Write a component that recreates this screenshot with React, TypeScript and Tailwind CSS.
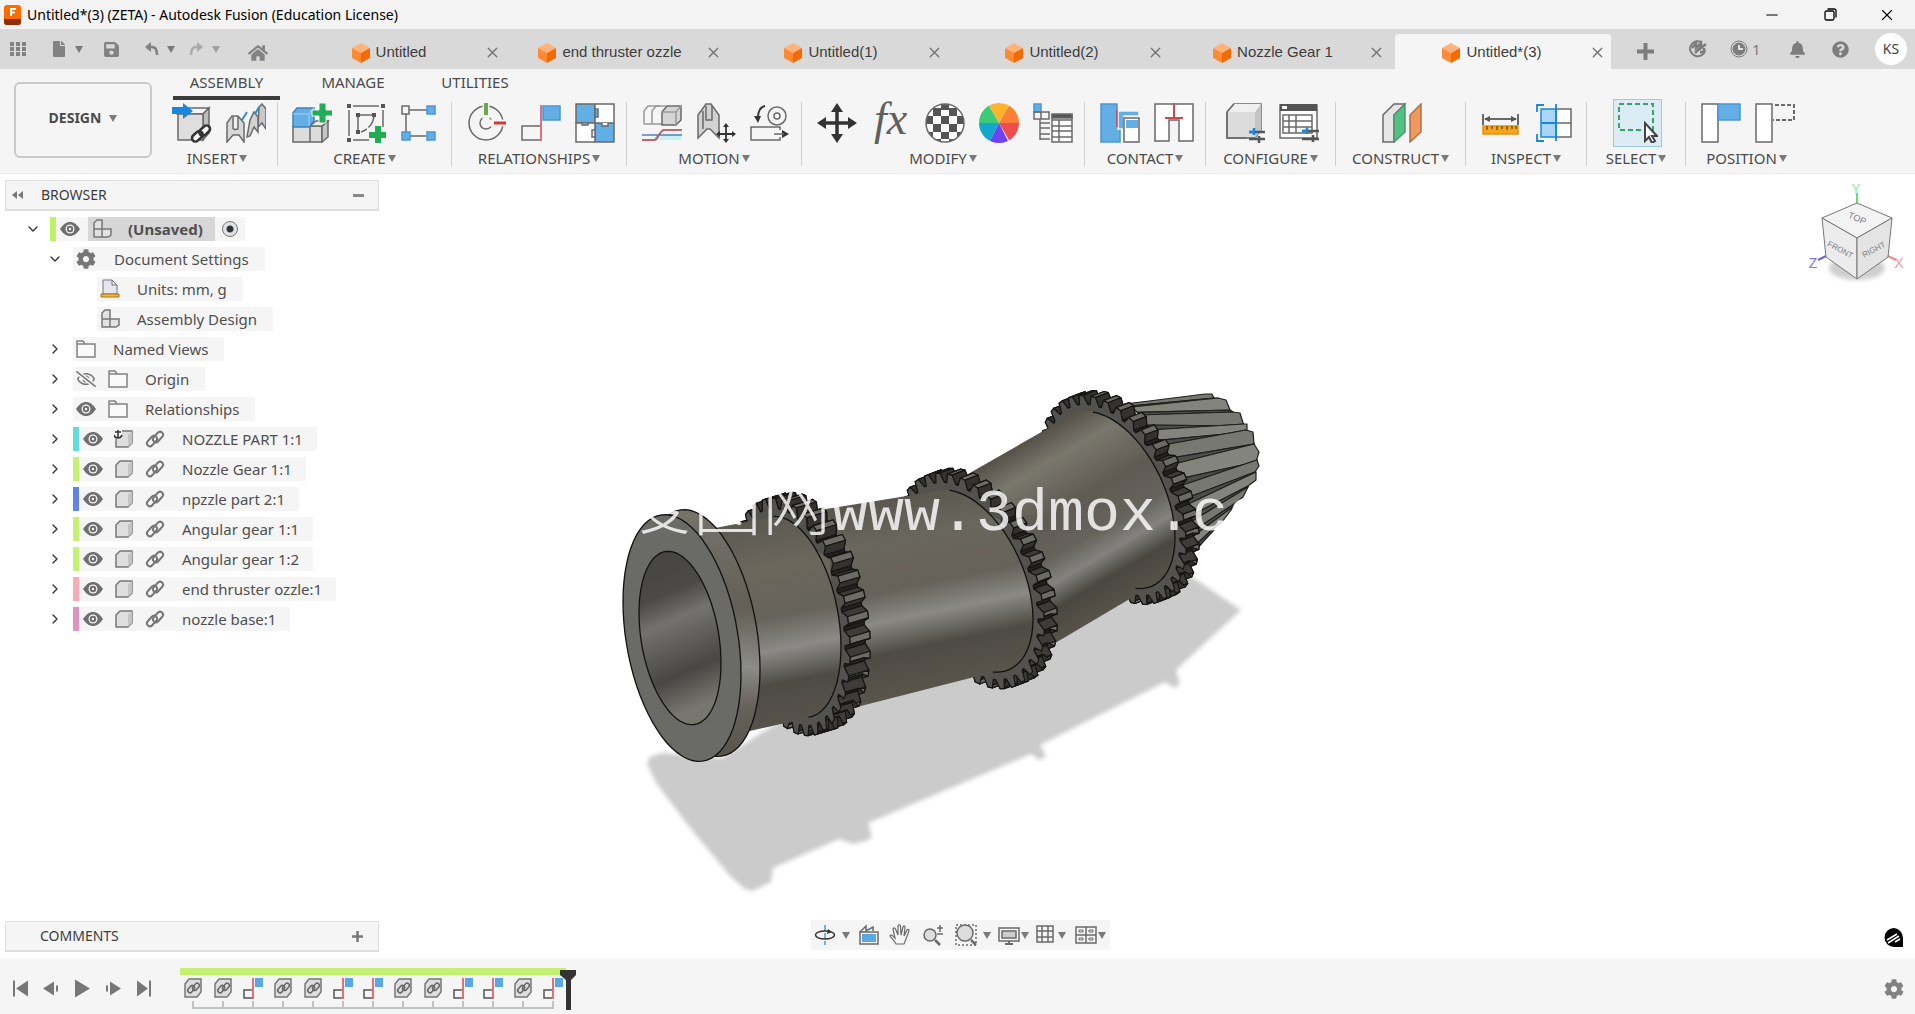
import type { ReactNode } from "react";
import { ChevronDown, ChevronRight, Minus, X } from "lucide-react";
import { FaBell, FaCog, FaFile, FaHome, FaQuestionCircle, FaRegEyeSlash, FaSave } from "react-icons/fa";

function Caret({ className = "text-[#7a7a7a]" }: { className?: string }) {
  return (
    <svg width="8" height="7" viewBox="0 0 8 7" className={className} aria-hidden="true">
      <path d="M0 0h8L4 7z" fill="currentColor" />
    </svg>
  );
}

function Icon({ children, size = 40 }: { children: ReactNode; size?: number }) {
  return (
    <svg width={size} height={size} viewBox="0 0 40 40" fill="none" stroke="#6a6a6a" strokeWidth="1.5" aria-hidden="true">
      {children}
    </svg>
  );
}

/* ---------- ribbon icons ---------- */

const icons: Record<string, ReactNode> = {
  insertComponent: (
    <Icon>
      <path d="M6 11l7-6h24l-6 6z" fill="#f4f4f4" />
      <path d="M31 11l6-6v25l-6 7z" fill="#bdbdbd" />
      <path d="M6 11h25v26H6z" fill="#dedede" />
      <path d="M0 4h11V0l10 8-10 8v-5H0z" fill="#1787e0" stroke="none" />
      <path d="M21 37l16-13" stroke="#f5f5f5" strokeWidth="8" />
      <g stroke="#333" strokeWidth="2.6">
        <rect x="19" y="30" width="12" height="7" rx="3.5" transform="rotate(-42 25 33)" />
        <rect x="27" y="24" width="12" height="7" rx="3.5" transform="rotate(-42 33 28)" />
      </g>
    </Icon>
  ),
  insertDerive: (
    <Icon>
      <path d="M33 4l3-3 4 5v20l-4-6-4 4z" fill="#c8c8c8" />
      <path d="M24 17l4-8 4 5v15l-4-5-4 9-3 1z" fill="#d2d2d2" />
      <path d="M16 17l5-8M29 11l4-7" stroke="#2a8fd8" strokeWidth="2" />
      <path d="M1 20l5-7h6l6 7v19l-5-7H7l-6 7z" fill="#d8d8d8" />
      <path d="M7 14v11c0 2 5 2 5 0V14" fill="#eee" />
    </Icon>
  ),
  newComponent: (
    <Icon>
      <path d="M1 23h17v16H1zM18 23h12v16H18z" fill="#dcdcdc" />
      <path d="M30 23l6-5v16l-6 5z" fill="#c5c5c5" />
      <path d="M18 23l6-5h12l-6 5z" fill="#eee" />
      <path d="M1 10l4-5h17v13l-5 6H1z" fill="#64aee6" stroke="#3f83b5" />
      <path d="M1 11h16v12M17 11l5-6" stroke="#8cc6f0" />
      <path d="M27 0h7v7h7v6h-7v7h-7v-7h-7V7h7z" fill="#1fae54" stroke="#f5f5f5" strokeWidth="1" />
    </Icon>
  ),
  sketch: (
    <Icon>
      <path d="M7 3h26M3 7v26M37 7v17M7 37h16" />
      <path d="M12 28V12h16c0 9-7 15-13 17" strokeDasharray="14 2" />
      <g fill="#555" stroke="none">
        <path d="M1 1h4v4H1zM35 1h4v4h-4zM1 35h4v4H1zM10 10h4v4h-4zM26 10h4v4h-4zM10 27h4v4h-4z" />
      </g>
      <path d="M29 23h6v6h6v6h-6v6h-6v-6h-6v-6h6z" fill="#1fae54" stroke="none" />
    </Icon>
  ),
  pattern: (
    <Icon>
      <path d="M2 3h7v8H2zM9 7h18M6 11v18M10 33h16" />
      <path d="M27 3h8v8h-8zM2 29h8v8H2zM27 29h8v8h-8z" fill="#64aee6" stroke="#4a97d4" />
    </Icon>
  ),
  joint: (
    <Icon>
      <circle cx="19" cy="20" r="17" />
      <circle cx="19" cy="20" r="6" />
      <path d="M19 0v18" stroke="#f5f5f5" strokeWidth="7" />
      <path d="M21 20h18" stroke="#f5f5f5" strokeWidth="7" />
      <path d="M19 0v12" stroke="#6aa84f" strokeWidth="4" />
      <path d="M27 20h12" stroke="#d93636" strokeWidth="3" />
    </Icon>
  ),
  asBuilt: (
    <Icon>
      <path d="M19 23H1v14h18" />
      <path d="M22 3h17v14H22z" fill="#64aee6" stroke="#4a97d4" />
      <path d="M20 2v36" stroke="#d5474e" />
    </Icon>
  ),
  rigidGroup: (
    <Icon>
      <path d="M1 1h19v19H1zM20 20h19v19H20z" fill="#64aee6" />
      <path d="M20 1h19v19H20zM1 20h19v19H1z" fill="#fff" />
      <path d="M20 6h3v8h-3zM7 20v2h6v-2" fill="#64aee6" />
      <path d="M20 27h-3v7h3zM27 20v3h6v-3" fill="#fff" />
    </Icon>
  ),
  motionStudy: (
    <Icon>
      <path d="M2 21V8l4-5h12" stroke="#999" />
      <path d="M10 21V8l4-5h10M2 21h18" stroke="#999" />
      <path d="M20 9l5-6h14v14l-5 5H20z" fill="#d5d5d5" />
      <path d="M34 9v13M20 9h14l5-6" stroke="#999" />
      <path d="M22 31h17v6H16z" fill="#c7f0f4" stroke="none" />
      <path d="M0 37h12l9-10h18" stroke="#58c5bd" />
      <path d="M0 32h40" stroke="#5580b8" />
      <path d="M0 37h13c3 0 5-10 9-10h18" stroke="#d5474e" />
    </Icon>
  ),
  drive: (
    <Icon>
      <path d="M2 12l8-11h5l8 11v23l-9-9h-3l-9 9z" fill="#d2d2d2" />
      <path d="M10 3v14h6V3M7 8v18" />
      <path d="M30 22v17M21 31h18" stroke="#333" strokeWidth="1.8" />
      <path d="M30 20l3 4h-6zM30 40l3-4h-6zM20 31l4-3v6zM40 31l-4-3v6z" fill="#333" stroke="none" />
    </Icon>
  ),
  motionLink: (
    <Icon>
      <circle cx="27" cy="13" r="9" />
      <circle cx="27" cy="13" r="3" />
      <path d="M15 3C10 4 8 9 8 15" stroke="#333" strokeWidth="2" />
      <path d="M4 13h7l-3 7zM32 27l7 4-7 4z" fill="#333" stroke="none" />
      <path d="M30 27v-3H1v13h29v-3M24 31h10" />
    </Icon>
  ),
  move: (
    <Icon>
      <path d="M20 5v30M5 20h30" stroke="#333" strokeWidth="3.5" />
      <path d="M20 0l6 9H14zM20 40l6-9H14zM0 20l9-6v12zM40 20l-9-6v12z" fill="#333" stroke="none" />
    </Icon>
  ),
  parameters: (
    <span className="-mt-2 font-['Liberation_Serif',serif] text-[46px] leading-none text-[#5f5f5f] italic">fx</span>
  ),
  physicalMaterial: (
    <Icon>
      <clipPath id="ball">
        <circle cx="20" cy="20" r="19" />
      </clipPath>
      <g clipPath="url(#ball)" stroke="none">
        <path d="M0 0h40v40H0z" fill="#fff" />
        <path
          d="M16 0h8v7h-8zM8 5h8v8H8zM24 5h8v8h-8zM1 13h7v8H1zM16 13h8v8h-8zM32 13h7v8h-7zM8 21h8v8H8zM24 21h8v8h-8zM1 29h7v5H1zM16 29h8v7h-8zM32 29h7v5h-7zM10 36h6v4h-6zM24 36h6v4h-6z"
          fill="#555"
        />
      </g>
      <circle cx="20" cy="20" r="19" />
    </Icon>
  ),
  appearance: (
    <Icon>
      <clipPath id="wheel">
        <circle cx="20" cy="20" r="20" />
      </clipPath>
      <g clipPath="url(#wheel)" stroke="none">
        <path d="M20 20L6-4h28z" fill="#fbb42b" />
        <path d="M20 20L34-4l10 24z" fill="#fb8137" />
        <path d="M20 20h24L34 44z" fill="#ef4d4d" />
        <path d="M20 20l12 24H8z" fill="#6f42f5" />
        <path d="M20 20L8 44-6 20z" fill="#10a9cb" />
        <path d="M20 20H-6L6-4z" fill="#3fca78" />
      </g>
    </Icon>
  ),
  manageMaterials: (
    <Icon>
      <path d="M1 1h7v8H1z" fill="#64aee6" stroke="#4a97d4" />
      <path d="M1 9h7v7H1zM8 9h8v7H8zM7 20h10M7 25h10M7 31h10M7 36h10M7 16v21" />
      <path d="M19 12h20v27H19z" fill="#fff" />
      <path d="M19 17h20M19 23h20M19 28h20M19 34h20M26 17v22" />
      <path d="M19 11h20v4H19z" fill="#555" />
    </Icon>
  ),
  contactSets: (
    <Icon>
      <path d="M1 1h16v24h3v14H1z" fill="#64aee6" stroke="#4a97d4" />
      <path d="M18 8h21v5H24v13h-6z" fill="#64aee6" stroke="#f5f5f5" />
      <path d="M17 7v17" stroke="#d5474e" />
      <path d="M24 15h15v24H24z" fill="#fff" />
      <path d="M26 17h12v8H26z" fill="#64aee6" stroke="none" />
    </Icon>
  ),
  contactAll: (
    <Icon>
      <path d="M1 1h38v37H25V17H15v21H1z" fill="#fff" />
      <path d="M20 0v15M11 15h18" stroke="#d5474e" strokeWidth="2" />
    </Icon>
  ),
  configure: (
    <Icon>
      <path d="M2 9l7-8h27v26l-6 8H2z" fill="#dcdcdc" />
      <path d="M30 9l6-8v26l-6 8z" fill="#c4c4c4" stroke="none" />
      <path d="M2 9l7-8h27l-6 8z" fill="#f0f0f0" stroke="none" />
      <path d="M2 9l7-8M2 9v26h20" />
      <path d="M24 29h16M24 36h16M34 33v7" stroke="#555" strokeWidth="2.5" />
      <path d="M24 29h5M29 25v7" stroke="#1787e0" strokeWidth="2.5" />
    </Icon>
  ),
  configTable: (
    <Icon>
      <path d="M1 2h37v33H1z" fill="#fff" />
      <path d="M1 1h37v7H1z" fill="#555" stroke="none" />
      <path d="M3 3h5v3H3z" fill="#fff" stroke="none" />
      <path d="M4 12h29v18H4zM4 18h29M4 24h29M10 12v18M17 12v18" />
      <path d="M23 28h17M23 36h17M34 32v7" stroke="#555" strokeWidth="2.5" />
      <path d="M23 28h6M28 24v7" stroke="#1787e0" strokeWidth="2.5" />
    </Icon>
  ),
  plane: (
    <Icon>
      <path d="M1 12L12 1h11L12 12v27H1z" fill="#e6e6e6" />
      <path d="M12 12L23 1v28L12 39z" fill="#4fc482" stroke="#5b8f70" />
      <path d="M28 12L39 1v28L28 39z" fill="#f0995c" stroke="#a8744f" />
    </Icon>
  ),
  measure: (
    <Icon>
      <path d="M2 11v11M37 11v11M4 16h31" strokeWidth="2" />
      <path d="M3 16l6-3v6zM36 16l-6-3v6z" fill="#555" stroke="none" />
      <path d="M2 23h35v8H2z" fill="#f5a51d" stroke="#e0920c" />
      <path d="M6 23v4M11 23v3M16 23v4M21 23v3M26 23v4M31 23v3M35 23v3" stroke="#7a560f" />
    </Icon>
  ),
  interference: (
    <Icon>
      <path d="M21 6h15v28H21zM21 20h15" fill="#fff" />
      <path d="M6 6h15v28H6z" fill="#a9d5f7" stroke="#1787e0" />
      <path d="M6 20h15M21 1v37M2 9V2h7M2 31v7h7" stroke="#1787e0" strokeWidth="1.8" />
    </Icon>
  ),
  select: (
    <Icon>
      <path d="M1 1h34v26H1z" stroke="#2fa866" strokeWidth="2" strokeDasharray="5 3" />
      <path d="M27 20v18l4-4 3 6 3-2-3-5h5z" fill="#fff" stroke="#444" strokeWidth="2" />
    </Icon>
  ),
  capture: (
    <Icon>
      <path d="M1 1h16v38H1z" fill="#fff" />
      <path d="M17 1h22v16H17z" fill="#64aee6" stroke="#4a97d4" />
    </Icon>
  ),
  revert: (
    <Icon>
      <path d="M1 1h16v38H1z" fill="#fff" />
      <path d="M20 2h19v15H18" strokeWidth="2" strokeDasharray="4 2" />
    </Icon>
  ),
};

const groups: { label: string; width: string; tools: string[] }[] = [
  { label: "INSERT", width: "w-[121px]", tools: ["insertComponent", "insertDerive"] },
  { label: "CREATE", width: "w-[174px]", tools: ["newComponent", "sketch", "pattern"] },
  { label: "RELATIONSHIPS", width: "w-[175px]", tools: ["joint", "asBuilt", "rigidGroup"] },
  { label: "MOTION", width: "w-[175px]", tools: ["motionStudy", "drive", "motionLink"] },
  {
    label: "MODIFY",
    width: "w-[283px]",
    tools: ["move", "parameters", "physicalMaterial", "appearance", "manageMaterials"],
  },
  { label: "CONTACT", width: "w-[121px]", tools: ["contactSets", "contactAll"] },
  { label: "CONFIGURE", width: "w-[130px]", tools: ["configure", "configTable"] },
  { label: "CONSTRUCT", width: "w-[130px]", tools: ["plane"] },
  { label: "INSPECT", width: "w-[121px]", tools: ["measure", "interference"] },
  { label: "SELECT", width: "w-[99px]", tools: ["select"] },
  { label: "POSITION", width: "w-[121px]", tools: ["capture", "revert"] },
];

/* ---------- top bars ---------- */

function TitleBar() {
  return (
    <header className="flex h-[29px] shrink-0 items-center bg-[#f3f3f3] pl-1 text-sm text-black">
      <svg width="17" height="20" viewBox="0 0 17 20" aria-hidden="true">
        <rect width="17" height="20" rx="3" fill="#ff6b00" />
        <path d="M0 14h17v3a3 3 0 0 1-3 3H3a3 3 0 0 1-3-3z" fill="#8f3000" />
        <path d="M6 11V3h6v2H8v1.500h3v2H8V11z" fill="#fff" />
      </svg>
      <h1 className="ml-1.5 flex-1">Untitled*(3) (ZETA) - Autodesk Fusion (Education License)</h1>
      <button type="button" aria-label="Minimize" className="flex w-[58px] justify-center">
        <Minus size={18} strokeWidth={1.5} />
      </button>
      <button type="button" aria-label="Restore" className="flex w-[58px] justify-center">
        <svg width="13" height="13" viewBox="0 0 13 13" fill="none" stroke="#000" strokeWidth="1.3">
          <rect x="1" y="3" width="9" height="9" rx="1.500" />
          <path d="M3.500 1H10a2 2 0 0 1 2 2v6.500" />
        </svg>
      </button>
      <button type="button" aria-label="Close" className="flex w-[56px] justify-center">
        <X size={18} strokeWidth={1.5} />
      </button>
    </header>
  );
}

function DocCube() {
  return (
    <svg width="18" height="20" viewBox="0 0 18 20" aria-hidden="true">
      <path d="M9 0l9 5-9 5-9-5z" fill="#ffb27a" />
      <path d="M0 5l9 5v10l-9-5z" fill="#ff8a35" />
      <path d="M18 5l-9 5v10l9-5z" fill="#f26a00" />
    </svg>
  );
}

const documents = ["Untitled", "end thruster ozzle", "Untitled(1)", "Untitled(2)", "Nozzle Gear 1", "Untitled*(3)"];

function DocTab({ name, active }: { name: string; active: boolean }) {
  return (
    <div
      className={`flex h-[35px] items-center pt-0.5 pr-[5px] ${
        active ? "ml-[5px] w-[216px] rounded-t bg-[#f5f5f5]" : "w-[221px] pl-[9px]"
      }`}
    >
      <button type="button" className="flex flex-1 items-center justify-center gap-1.5">
        <DocCube />
        {name}
      </button>
      <button type="button" aria-label={`Close ${name}`} className="text-[#777]">
        <X size={17} strokeWidth={2} />
      </button>
    </div>
  );
}

function TabBar() {
  return (
    <div className="flex h-10 shrink-0 items-end bg-[#d9d9d9] text-[#3c3c3c]">
      <div className="flex h-10 w-[285px] items-center pl-2.5 text-[#828282]">
        <button type="button" aria-label="Data panel" className="mr-6">
          <svg width="17" height="17" viewBox="0 0 17 17" fill="currentColor">
            <path d="M0 1h4v4H0zM6 1h4v4H6zM12 1h4v4h-4zM0 6h4v4H0zM6 6h4v4H6zM12 6h4v4h-4zM0 11h4v4H0zM6 11h4v4H6zM12 11h4v4h-4z" />
          </svg>
        </button>
        <button type="button" aria-label="File" className="flex items-center gap-2">
          <FaFile size={16} />
          <Caret />
        </button>
        <button type="button" aria-label="Save" className="ml-5">
          <FaSave size={17} />
        </button>
        <button type="button" aria-label="Undo" className="ml-6 flex items-center gap-2">
          <svg width="15" height="14" viewBox="0 0 15 14" fill="none" stroke="currentColor" strokeWidth="2.500">
            <path d="M2 5h6c4 0 5 3 5 8" />
            <path d="M7 0L1 5l6 5" fill="currentColor" stroke="none" />
          </svg>
          <Caret />
        </button>
        <button type="button" aria-label="Redo" className="ml-3.5 flex items-center gap-2 text-[#ababab]">
          <svg width="15" height="14" viewBox="0 0 15 14" fill="none" stroke="currentColor" strokeWidth="2.500">
            <path d="M13 5H7c-4 0-5 3-5 8" />
            <path d="M8 0l6 5-6 5" fill="currentColor" stroke="none" />
          </svg>
          <Caret className="text-[#a0a0a0]" />
        </button>
        <button type="button" aria-label="Home" className="mt-2 ml-7">
          <FaHome size={20} />
        </button>
      </div>
      <nav className="flex items-end font-['Liberation_Sans',sans-serif] text-[15px]">
        {documents.map((name, i) => (
          <DocTab key={name} name={name} active={i === documents.length - 1} />
        ))}
      </nav>
      <div className="flex h-10 flex-1 items-center pl-[26px] text-[#7d7d7d]">
        <button type="button" aria-label="New document" className="mt-1 w-[52px]">
          <svg width="17" height="17" viewBox="0 0 17 17" stroke="currentColor" strokeWidth="4">
            <path d="M8.500 0v17M0 8.500h17" />
          </svg>
        </button>
        <button type="button" aria-label="Extensions" className="w-[41px]">
          <svg width="18" height="18" viewBox="0 0 18 18" fill="none" stroke="currentColor" strokeWidth="2">
            <path d="M12 2a7.500 7.500 0 1 0 4 8" />
            <path d="M6 13l6-6M3 8l4-5v5l5-5v5l5-4M11 12h4V8" strokeWidth="2.500" />
          </svg>
        </button>
        <button type="button" aria-label="Job status" className="flex w-[59px] items-center gap-1 text-[15px]">
          <svg width="18" height="18" viewBox="0 0 18 18" fill="none" stroke="currentColor">
            <circle cx="9" cy="9" r="8" />
            <circle cx="9" cy="9" r="6" fill="currentColor" />
            <path d="M9 5v4h4" stroke="#fff" strokeWidth="1.500" />
          </svg>
          1
        </button>
        <button type="button" aria-label="Notifications" className="w-[43px]">
          <FaBell size={17} />
        </button>
        <button type="button" aria-label="Help" className="flex-1">
          <FaQuestionCircle size={17} />
        </button>
        <button type="button" className="mr-2 h-8 w-8 rounded-full bg-white text-sm text-[#444]">
          KS
        </button>
      </div>
    </div>
  );
}

function Ribbon() {
  return (
    <div className="flex h-[105px] shrink-0 border-b border-[#ececec] bg-[#f5f5f5] text-[15px] text-[#4a4a4a]">
      <button
        type="button"
        className="mt-[13px] ml-3.5 flex h-[76px] w-[138px] items-center justify-center gap-2 rounded-md border-2 border-[#c9c9c9] pb-1 text-sm font-bold"
      >
        DESIGN
        <Caret />
      </button>
      <div className="ml-[5px]">
        <nav className="ml-4 flex h-[31px]">
          <button type="button" className="w-[107px] border-b-4 border-[#3c3c3c]">
            ASSEMBLY
          </button>
          <button type="button" className="ml-3.5 w-[118px] pb-1">
            MANAGE
          </button>
          <button type="button" className="ml-1 w-[118px] pb-1">
            UTILITIES
          </button>
        </nav>
        <div className="mt-0.5 flex">
          {groups.map((g) => (
            <section
              key={g.label}
              className={`${g.width} flex h-16 flex-col items-center border-r border-[#cfcfcf] last:border-r-0`}
            >
              <div className="-mt-[3px] flex pl-[3px]">
                {g.tools.map((t) => (
                  <button
                    key={t}
                    type="button"
                    aria-label={t}
                    className={`flex items-center justify-center ${
                      t === "select" ? "h-12 w-[49px] border border-[#9ccae3] bg-[#dcecf5]" : "h-12 w-[54px]"
                    }`}
                  >
                    {icons[t]}
                  </button>
                ))}
              </div>
              <button type="button" className="mt-px flex items-center gap-0.5 leading-5">
                {g.label}
                <Caret />
              </button>
            </section>
          ))}
        </div>
      </div>
    </div>
  );
}

/* ---------- browser tree ---------- */

function Folder() {
  return (
    <svg width="20" height="18" viewBox="0 0 20 18" fill="#fafafa" stroke="#828282" strokeWidth="1.500" aria-hidden="true">
      <path d="M1 4V1h6l2 3h10v13H1z" />
      <path d="M1 4h8" />
    </svg>
  );
}

function Body({ anchored = false }: { anchored?: boolean }) {
  return (
    <svg width="20" height="20" viewBox="0 0 20 20" fill="#dedede" stroke="#777" strokeWidth="1.500" aria-hidden="true">
      <path d="M2 6l4-4h12v12l-4 4H2z" />
      <path d="M14 6l4-4v12l-4 4z" fill="#c4c4c4" stroke="none" />
      {anchored && (
        <>
          <path d="M0 0h8v10H0z" fill="#f5f5f5" stroke="none" />
          <path d="M4 1v8M1 3h6M0 6c1 4 7 4 8 0" fill="none" stroke="#333" />
        </>
      )}
    </svg>
  );
}

function AssemblyIcon() {
  return (
    <svg width="20" height="20" viewBox="0 0 20 20" fill="#e2e2e2" stroke="#777" strokeWidth="1.500" aria-hidden="true">
      <path d="M2 4l3-3h5v17H2zM10 10h9v6l-3 2h-6M2 10h8" />
    </svg>
  );
}

function UnitsIcon() {
  return (
    <svg width="20" height="20" viewBox="0 0 20 20" aria-hidden="true">
      <path d="M3 1h9l5 5v9H3z" fill="#e6e6ee" stroke="#777" />
      <path d="M12 1v5h5" fill="none" stroke="#777" />
      <path d="M1 15h18v3H1z" fill="#f5b53a" stroke="#a8741a" />
    </svg>
  );
}

function Eye() {
  return (
    <svg width="20" height="14" viewBox="0 0 20 14" aria-hidden="true">
      <path d="M0 7C4 1 7 0 10 0s6 1 10 7c-4 6-7 7-10 7S4 13 0 7z" fill="#6f6f6f" />
      <circle cx="10" cy="7" r="4.500" fill="#f5f5f5" />
      <circle cx="10" cy="7" r="3.200" fill="#6f6f6f" />
      <circle cx="10" cy="7" r="1.200" fill="#f5f5f5" />
    </svg>
  );
}

function ChainLink() {
  return (
    <svg width="20" height="20" viewBox="0 0 20 20" fill="none" stroke="#777" strokeWidth="2" aria-hidden="true">
      <rect x="1" y="9" width="12" height="6" rx="3" transform="rotate(-48 7 12)" />
      <rect x="7" y="5" width="12" height="6" rx="3" transform="rotate(-48 13 8)" />
    </svg>
  );
}

type Row = { label: string; indent: string; icons: ReactNode; chevron?: boolean };

const rows: Row[] = [
  { label: "Units: mm, g", indent: "ml-[72px]", icons: <UnitsIcon /> },
  { label: "Assembly Design", indent: "ml-[72px]", icons: <AssemblyIcon /> },
  { label: "Named Views", indent: "ml-2", chevron: true, icons: <Folder /> },
  {
    label: "Origin",
    indent: "ml-2",
    chevron: true,
    icons: (
      <>
        <FaRegEyeSlash size={20} className="text-[#777]" />
        <Folder />
      </>
    ),
  },
  {
    label: "Relationships",
    indent: "ml-2",
    chevron: true,
    icons: (
      <>
        <Eye />
        <Folder />
      </>
    ),
  },
];

const components = [
  { label: "NOZZLE PART 1:1", bar: "bg-[#62dcdc]", anchored: true },
  { label: "Nozzle Gear 1:1", bar: "bg-[#c5f172]" },
  { label: "npzzle part 2:1", bar: "bg-[#5f85e6]" },
  { label: "Angular gear 1:1", bar: "bg-[#c5f172]" },
  { label: "Angular gear 1:2", bar: "bg-[#c5f172]" },
  { label: "end thruster ozzle:1", bar: "bg-[#f9acb6]" },
  { label: "nozzle base:1", bar: "bg-[#e092c2]" },
];

function Expander({ open = false }: { open?: boolean }) {
  return (
    <button type="button" aria-label={open ? "Collapse" : "Expand"} className="flex w-5 justify-center text-[#333]">
      {open ? <ChevronDown size={16} strokeWidth={2} /> : <ChevronRight size={16} strokeWidth={2} />}
    </button>
  );
}

function Browser() {
  return (
    <aside className="w-[374px]">
      <div className="flex h-[31px] items-center border border-b-2 border-[#dedede] bg-[#f5f5f5] text-sm text-[#3c3c3c]">
        <button type="button" aria-label="Collapse panel" className="w-[35px] pl-1.5">
          <svg width="11" height="8" viewBox="0 0 11 8" fill="#777">
            <path d="M5 0v8L0 4zM11 0v8L6 4z" />
          </svg>
        </button>
        <h2 className="flex-1">BROWSER</h2>
        <button type="button" aria-label="Minimize panel" className="mr-3.5 h-[3px] w-[11px] bg-[#888]" />
      </div>
      <ul className="mt-[3px] text-[15px] text-[#4f4f4f]">
        <li className="flex h-[30px] items-center pl-[18px]">
          <Expander open />
          <div className="ml-[7px] flex h-6 items-center bg-[#f5f5f5]">
            <span className="h-full w-1.5 bg-[#bdf267]" />
            <span className="ml-1 w-7">
              <Eye />
            </span>
            <button type="button" className="flex h-full items-center gap-4 bg-[#d6d6d6] pr-3 pl-1 font-bold">
              <AssemblyIcon />
              (Unsaved)
            </button>
            <input
              type="radio"
              defaultChecked
              aria-label="Activate component"
              className="mx-[7px] h-4 w-4 appearance-none rounded-full border border-[#777] bg-[radial-gradient(#333_0_3px,#dfe3ea_4px)]"
            />
          </div>
        </li>
        <li className="flex h-[30px] items-center pl-10">
          <Expander open />
          <div className="ml-2 flex h-6 items-center gap-[18px] bg-[#f5f5f5] pr-4 pl-[3px]">
            <FaCog size={20} className="text-[#777]" />
            Document Settings
          </div>
        </li>
        {rows.map((r) => (
          <li key={r.label} className={`flex h-[30px] items-center ${r.chevron ? "pl-10" : "pl-5"}`}>
            {r.chevron && <Expander />}
            <div className={`${r.indent} flex h-6 items-center bg-[#f5f5f5] pr-4 pl-[3px]`}>
              <span className="mr-[17px] flex items-center gap-3">{r.icons}</span>
              {r.label}
            </div>
          </li>
        ))}
        {components.map((c) => (
          <li key={c.label} className="flex h-[30px] items-center pl-10">
            <Expander />
            <div className="ml-2 flex h-6 items-center bg-[#f5f5f5] pr-3.5">
              <span className={`${c.bar} mr-1 h-full w-1.5`} />
              <span className="mr-[17px] flex items-center gap-[11px]">
                <Eye />
                <Body anchored={c.anchored} />
                <ChainLink />
              </span>
              {c.label}
            </div>
          </li>
        ))}
      </ul>
    </aside>
  );
}

/* ---------- model view ---------- */

// A circle seen at an angle: x = cx + rx cos t, y = cy + k cos t + h sin t
type Ring = { cx: number; cy: number; rx: number; k: number; h: number };

const at = (r: Ring, t: number, s = 1, dx = 0, dy = 0): [number, number] => [
  r.cx + dx + s * r.rx * Math.cos(t),
  r.cy + dy + s * (r.k * Math.cos(t) + r.h * Math.sin(t)),
];

const toPath = (pts: [number, number][]) => "M" + pts.map((p) => `${p[0].toFixed(1)} ${p[1].toFixed(1)}`).join("L") + "Z";

const ringPath = (r: Ring, s = 1, dx = 0, dy = 0) =>
  toPath(Array.from({ length: 72 }, (_, i) => at(r, (i / 72) * Math.PI * 2, s, dx, dy)));

const flange: Ring = { cx: 682, cy: 638, rx: 59, k: 36, h: 118 };
const bore: Ring = { cx: 680, cy: 638, rx: 41, k: 25, h: 83 };
const ring1: Ring = { cx: 790, cy: 617, rx: 51, k: 30, h: 96 };
const ring2: Ring = { cx: 970, cy: 581, rx: 63, k: 38, h: 83 };
const ring3: Ring = { cx: 1113, cy: 500, rx: 62, k: 38, h: 80 };

const TEETH = 36;

function Gear({ ring, dx, dy }: { ring: Ring; dx: number; dy: number }) {
  const step = (Math.PI * 2) / TEETH;
  const outline: { t: number; s: number }[] = [];
  for (let i = 0; i < TEETH; i++) {
    const t = i * step;
    outline.push({ t, s: 1.08 }, { t: t + step * 0.25, s: 1.18 }, { t: t + step * 0.6, s: 1.18 }, { t: t + step * 0.8, s: 1.08 });
  }
  const front = outline.map((p) => at(ring, p.t, p.s));
  const back = outline.map((p) => at(ring, p.t, p.s, dx, dy));
  const shades = ["#3d3c38", "#6c6b66", "#33322f", "#232220"];
  return (
    <g stroke="#151513" strokeWidth="1.2" strokeLinejoin="round">
      <path d={toPath(back)} fill="#3d3c38" />
      {front.map((p, i) => {
        const n = (i + 1) % front.length;
        return <path key={i} d={toPath([p, front[n], back[n], back[i]])} fill={shades[i % 4]} />;
      })}
      <path d={toPath(front)} fill="#53524e" />
    </g>
  );
}

function TubeEdge({ ring }: { ring: Ring }) {
  const pts = Array.from({ length: 32 }, (_, i) => at(ring, -1.9 + i * 0.1));
  return <polyline points={pts.map((p) => p.join(",")).join(" ")} fill="none" stroke="#111" strokeWidth="1.3" />;
}

// Ridges of the bevel gear: start on the ring, end on the outer rim, with the notch after each one
const ridges: { base: [number, number]; tip: [number, number]; top: [number, number]; notch: [number, number] }[] = [
  { base: [1125, 404], tip: [1205, 394], top: [1212, 394], notch: [1214, 398] },
  { base: [1132, 407], tip: [1218, 398], top: [1226, 400], notch: [1230, 410] },
  { base: [1140, 415], tip: [1233, 412], top: [1240, 413], notch: [1244, 426] },
  { base: [1150, 430], tip: [1244, 424], top: [1247, 424], notch: [1247, 432] },
  { base: [1158, 446], tip: [1246, 430], top: [1253, 432], notch: [1254, 444] },
  { base: [1166, 466], tip: [1254, 444], top: [1259, 452], notch: [1256, 462] },
  { base: [1174, 488], tip: [1257, 460], top: [1259, 466], notch: [1255, 472] },
  { base: [1180, 508], tip: [1256, 472], top: [1256, 480], notch: [1248, 486] },
  { base: [1184, 526], tip: [1248, 487], top: [1243, 497], notch: [1234, 504] },
  { base: [1188, 540], tip: [1234, 506], top: [1222, 522], notch: [1214, 528] },
  { base: [1190, 556], tip: [1214, 530], top: [1200, 546], notch: [1196, 550] },
];

function Model() {
  return (
    <svg viewBox="606 370 703 530" className="mt-[196px] h-[530px] w-[703px]" role="img" aria-label="Thruster nozzle assembly">
      <defs>
        <filter id="soft">
          <feGaussianBlur stdDeviation="2" />
        </filter>
        <linearGradient id="tube1" gradientUnits="userSpaceOnUse" x1="745" y1="520" x2="785" y2="725">
          <stop offset="0" stopColor="#5b5850" />
          <stop offset="0.25" stopColor="#6b675d" />
          <stop offset="0.48" stopColor="#66635b" />
          <stop offset="0.64" stopColor="#8b8a86" />
          <stop offset="0.8" stopColor="#4e4b45" />
          <stop offset="1" stopColor="#57534b" />
        </linearGradient>
        <linearGradient id="tube2" gradientUnits="userSpaceOnUse" x1="860" y1="505" x2="900" y2="700">
          <stop offset="0" stopColor="#5a574f" />
          <stop offset="0.2" stopColor="#69665d" />
          <stop offset="0.45" stopColor="#66625a" />
          <stop offset="0.6" stopColor="#8a8984" />
          <stop offset="0.76" stopColor="#4e4b44" />
          <stop offset="1" stopColor="#5a564d" />
        </linearGradient>
        <linearGradient id="tube3" gradientUnits="userSpaceOnUse" x1="1030" y1="440" x2="1125" y2="603">
          <stop offset="0" stopColor="#57534b" />
          <stop offset="0.15" stopColor="#7a776d" />
          <stop offset="0.4" stopColor="#5f5b53" />
          <stop offset="0.6" stopColor="#66635c" />
          <stop offset="0.72" stopColor="#83827e" />
          <stop offset="0.84" stopColor="#4a4740" />
          <stop offset="1" stopColor="#57534a" />
        </linearGradient>
        <linearGradient id="rim" x1="0" y1="0" x2="0" y2="1">
          <stop offset="0" stopColor="#74736c" />
          <stop offset="0.4" stopColor="#635f56" />
          <stop offset="0.64" stopColor="#8c8b87" />
          <stop offset="0.8" stopColor="#66625a" />
          <stop offset="1" stopColor="#57544d" />
        </linearGradient>
        <linearGradient id="inside" x1="0" y1="0" x2="0.2" y2="1">
          <stop offset="0" stopColor="#45443f" />
          <stop offset="0.3" stopColor="#4c4a47" />
          <stop offset="0.46" stopColor="#73726f" />
          <stop offset="0.78" stopColor="#494744" />
          <stop offset="1" stopColor="#77766f" />
        </linearGradient>
      </defs>

      <path
        filter="url(#soft)"
        fill="#cbcbcb"
        d="M647 762l3-5 12-4 60 5 300-190 167 7 52 35-65 60 4 14-6 4-9-6-125 63 6 11-6 4-9-6-163 69 4 14-6 4-13 3-14-5-66 29-2 14-18 9-8-2-14-12-40-48-35-46-7-15z"
      />

      <g stroke="#20201e" strokeWidth="1.2" strokeLinejoin="round">
        <path d={toPath([...ridges.map((r) => r.base), ...ridges.map((r) => r.notch).reverse()])} fill="#484945" />
        {ridges.slice(0, -1).map((r, i) => {
          const next = ridges[i + 1];
          const mid: [number, number] = [(r.base[0] + next.base[0] * 2) / 3, (r.base[1] + next.base[1] * 2) / 3];
          return (
            <g key={i}>
              <path d={toPath([r.base, r.tip, r.top, r.notch, mid])} fill={i % 2 ? "#83847e" : "#777872"} />
              <path d={toPath([mid, r.notch, next.tip, next.base])} fill="#4c4d48" />
            </g>
          );
        })}
      </g>

      <Gear ring={ring3} dx={13} dy={-5} />
      <path d="M940 490L1073 414C1080 411 1090 410 1098 413L1170 540 1150 584 1133 597 1018 665z" fill="url(#tube3)" />
      <path d={ringPath(ring3)} fill="url(#tube3)" />
      <TubeEdge ring={ring3} />

      <Gear ring={ring2} dx={13} dy={-5} />
      <path d="M770 518L944 490 1000 520 1020 640 990 673 806 720z" fill="url(#tube2)" />
      <path d={ringPath(ring2)} fill="url(#tube2)" />
      <TubeEdge ring={ring2} />

      <Gear ring={ring1} dx={20} dy={-6} />
      <path d="M705 530L772 517 830 560 835 680 808 718 750 731z" fill="url(#tube1)" />
      <path d={ringPath(ring1)} fill="url(#tube1)" />
      <TubeEdge ring={ring1} />

      <g stroke="#111" strokeWidth="1.3">
        <path d={ringPath(flange, 1, 19, -5)} fill="url(#rim)" />
        <path d={ringPath(flange)} fill="#6a6b67" />
        <path d={ringPath(bore)} fill="url(#inside)" />
      </g>

      <g fill="#fff" fillOpacity="0.82">
        <text x="624" y="530" fontFamily="'Noto Sans CJK SC', sans-serif" fontWeight="300" fontSize="69">
          爱图网
        </text>
        <text x="832" y="530" fontFamily="'Liberation Mono', monospace" fontSize="60">
          www.3dmox.com
        </text>
      </g>
    </svg>
  );
}

function ViewCube() {
  return (
    <svg width="110" height="112" viewBox="1800 178 110 112" className="font-['Liberation_Sans',sans-serif]" role="img" aria-label="View cube">
      <ellipse cx="1857" cy="268" rx="28" ry="12" fill="#cfcfcf" filter="url(#soft)" />
      <path d="M1857 203v-10" stroke="#5fe07f" strokeWidth="2" />
      <path d="M1826 256l-8 4" stroke="#6a60e0" strokeWidth="2" />
      <path d="M1888 256l8 4" stroke="#f08a8a" strokeWidth="2" />
      <g stroke="#777" strokeWidth="1" strokeLinejoin="round">
        <path d="M1857 203l35 15-35 20-35-20z" fill="#f3f3f3" />
        <path d="M1822 218l35 20v41l-31-22z" fill="#ececec" />
        <path d="M1892 218l-35 20v41l31-22z" fill="#e4e4e4" />
      </g>
      <g fontSize="9" fill="#7d7d7d" textAnchor="middle">
        <text transform="translate(1856 221) rotate(24)">TOP</text>
        <text transform="translate(1839 252) rotate(28)" fontSize="8">
          FRONT
        </text>
        <text transform="translate(1875 252) rotate(-28)" fontSize="8">
          RIGHT
        </text>
      </g>
      <g fontSize="14" textAnchor="middle">
        <text x="1856" y="194" fill="#8fe9a0">
          Y
        </text>
        <text x="1813" y="268" fill="#7a72dc">
          Z
        </text>
        <text x="1899" y="268" fill="#f29a9a">
          X
        </text>
      </g>
    </svg>
  );
}

/* ---------- navigation bar ---------- */

function NavIcon({ label, width, caret, children }: { label: string; width: string; caret?: string; children: ReactNode }) {
  return (
    <button type="button" aria-label={label} className={`flex items-center ${width}`}>
      <svg width="22" height="22" viewBox="0 0 22 22" fill="none" stroke="#6a6a6a" strokeWidth="1.500">
        {children}
      </svg>
      {caret && <Caret className={`${caret} text-[#7a7a7a]`} />}
    </button>
  );
}

function NavBar() {
  return (
    <div className="ml-1.5 flex h-[30px] w-[299px] items-center bg-[#f5f5f5] pl-[3px]">
      <NavIcon label="Orbit" width="w-11" caret="ml-1.5">
        <path d="M11 1v20" stroke="#3aa0dc" strokeDasharray="6 2" />
        <ellipse cx="11" cy="11" rx="9.500" ry="4" stroke="#333" />
        <path d="M14 5l4 3-5 2z" fill="#333" stroke="none" />
      </NavIcon>
      <NavIcon label="Look at" width="w-[31px]">
        <path d="M2 8h18v12H2z" />
        <path d="M4 10h14v8H4z" fill="#5aa7e3" stroke="none" />
        <path d="M2 8l6-6v5l7-4v4" />
      </NavIcon>
      <NavIcon label="Pan" width="w-[33px]">
        <path
          strokeWidth="1.200"
          d="M7 20c-2-4-4-5-6-8 1-2 3 0 5 2L4 5c1-2 2-1 3 1l2 5V2c1-2 2-1 2.500 0L12 11l2-8c1-2 2-1 2 1l-1 8 3-6c1-1 2-1 2 1l-3 8-2 5z"
        />
      </NavIcon>
      <NavIcon label="Zoom" width="w-[33px]">
        <circle cx="8" cy="11" r="6" fill="#ddd" />
        <path d="M13 16l5 5" strokeWidth="2.500" />
        <path d="M18 1v7M15 4h6M15 10h6" />
      </NavIcon>
      <NavIcon label="Fit" width="w-[43px]" caret="ml-1.5">
        <path d="M1 1h20v20H1z" strokeDasharray="2 2" />
        <circle cx="10" cy="9" r="8" fill="#ddd" />
        <path d="M16 16l5 5" strokeWidth="2.500" />
      </NavIcon>
      <NavIcon label="Display settings" width="w-9" caret="ml-px">
        <path d="M1 4h20v13H1z" />
        <path d="M4 7h14v7H4z" fill="#ccc" />
        <path d="M7 20h8M11 17v3" strokeWidth="2" />
      </NavIcon>
      <NavIcon label="Grid settings" width="w-[41px]" caret="ml-0.5">
        <path d="M3 2h16v16H3zM3 7h16M3 13h16M8 2v16M14 2v16" />
      </NavIcon>
      <NavIcon label="Viewports" width="w-[35px]" caret="ml-px">
        <path d="M1 3h20v16H1zM1 11h20M11 3v16" />
        <path d="M4 6h4v2H4zM14 6h4v2h-4zM4 14h4v2H4zM14 14h4v2h-4z" strokeWidth="1" />
      </NavIcon>
    </div>
  );
}

/* ---------- timeline ---------- */

const features = "ccjccjjccjjcj".split("");

function Feature({ kind }: { kind: string }) {
  return (
    <button type="button" aria-label={kind === "c" ? "Component" : "Joint"} className="flex w-[30px] flex-col items-center">
      <svg width="20" height="21" viewBox="0 0 20 21" fill="none" strokeWidth="1.500">
        {kind === "c" ? (
          <>
            <path d="M2 6l4-5h12v13l-4 5H2z" fill="#dedede" stroke="#777" />
            <g stroke="#666">
              <rect x="4" y="9" width="8" height="4.500" rx="2.200" transform="rotate(-50 8 11)" />
              <rect x="9" y="7" width="8" height="4.500" rx="2.200" transform="rotate(-50 12.500 9)" />
            </g>
          </>
        ) : (
          <>
            <path d="M9 12H1v8h8" stroke="#555" />
            <path d="M12 0h8v9h-8z" fill="#5aa7e3" />
            <path d="M10 0v21" stroke="#d5474e" />
          </>
        )}
      </svg>
      <span className="mt-0.5 h-1.5 w-0.5 bg-[#c0c4c4]" />
    </button>
  );
}

const playback = [
  ["To start", "M2 1h2v16H2zM17 1v16L5 9z"],
  ["Step back", "M12 2v14L1 9zM14 6h2v6h-2z"],
  ["Play", "M2 0v18l15-9z"],
  ["Step forward", "M6 2v14l11-7zM2 6h2v6H2z"],
  ["To end", "M14 1h2v16h-2zM2 1v16l11-8z"],
];

function Timeline() {
  return (
    <footer className="flex h-14 shrink-0 items-start bg-[#f5f5f5]">
      <div className="mt-[21px] flex w-[178px] gap-[13px] pl-[11px] text-[#777]">
        {playback.map(([label, d]) => (
          <button key={label} type="button" aria-label={label}>
            <svg width="18" height="19" viewBox="0 0 18 18" fill="currentColor">
              <path d={d} />
            </svg>
          </button>
        ))}
      </div>
      <div className="mt-2.5 ml-0.5">
        <div className="h-[7px] w-[386px] bg-[#c5f172]" />
        <div className="mt-[3px] -ml-[2px] flex">
          {features.map((k, i) => (
            <Feature key={i} kind={k} />
          ))}
        </div>
        <div className="ml-[12px] h-0.5 w-[362px] bg-[#c0c4c4]" />
      </div>
      <svg width="16" height="42" viewBox="0 0 16 42" className="mt-3 -ml-2" aria-hidden="true">
        <path d="M0 0h16v5l-5 5v30H6V10L0 5z" fill="#333" />
      </svg>
      <div className="flex-1" />
      <button type="button" aria-label="Timeline settings" className="mt-[21px] mr-[11px] text-[#828282]">
        <FaCog size={20} />
      </button>
    </footer>
  );
}

export default function App() {
  return (
    <div className="flex h-screen flex-col overflow-hidden bg-white font-['Noto_Sans',sans-serif]">
      <TitleBar />
      <TabBar />
      <Ribbon />
      <main className="flex min-h-0 flex-1 justify-between">
        <div className="flex w-96 flex-col justify-between pt-1.5 pb-1.5 pl-[5px]">
          <Browser />
          <div className="flex h-[31px] w-[374px] items-center border border-b-2 border-[#dedede] bg-[#f5f5f5] pr-3.5 pl-[34px] text-sm text-[#3c3c3c]">
            <h2 className="flex-1">COMMENTS</h2>
            <button type="button" aria-label="Add comment">
              <svg width="13" height="13" viewBox="0 0 13 13" stroke="#777" strokeWidth="2.500">
                <path d="M6.500 1v11M1 6.500h11" />
              </svg>
            </button>
          </div>
        </div>
        <div className="flex flex-col items-center justify-between pb-2">
          <Model />
          <NavBar />
        </div>
        <div className="flex w-96 flex-col items-end justify-between pt-1 pr-[5px] pb-2.5">
          <ViewCube />
          <button type="button" aria-label="Assistant" className="mr-1.5">
            <svg width="20" height="20" viewBox="0 0 20 20">
              <path d="M10 0a10 10 0 0 1 9 10v9h-9a9.500 9.500 0 0 1 0-19z" fill="#000" />
              <path d="M3 12l10-6M4 15l11-7M11 14l5-3" stroke="#fff" strokeWidth="1.500" />
            </svg>
          </button>
        </div>
      </main>
      <Timeline />
    </div>
  );
}
